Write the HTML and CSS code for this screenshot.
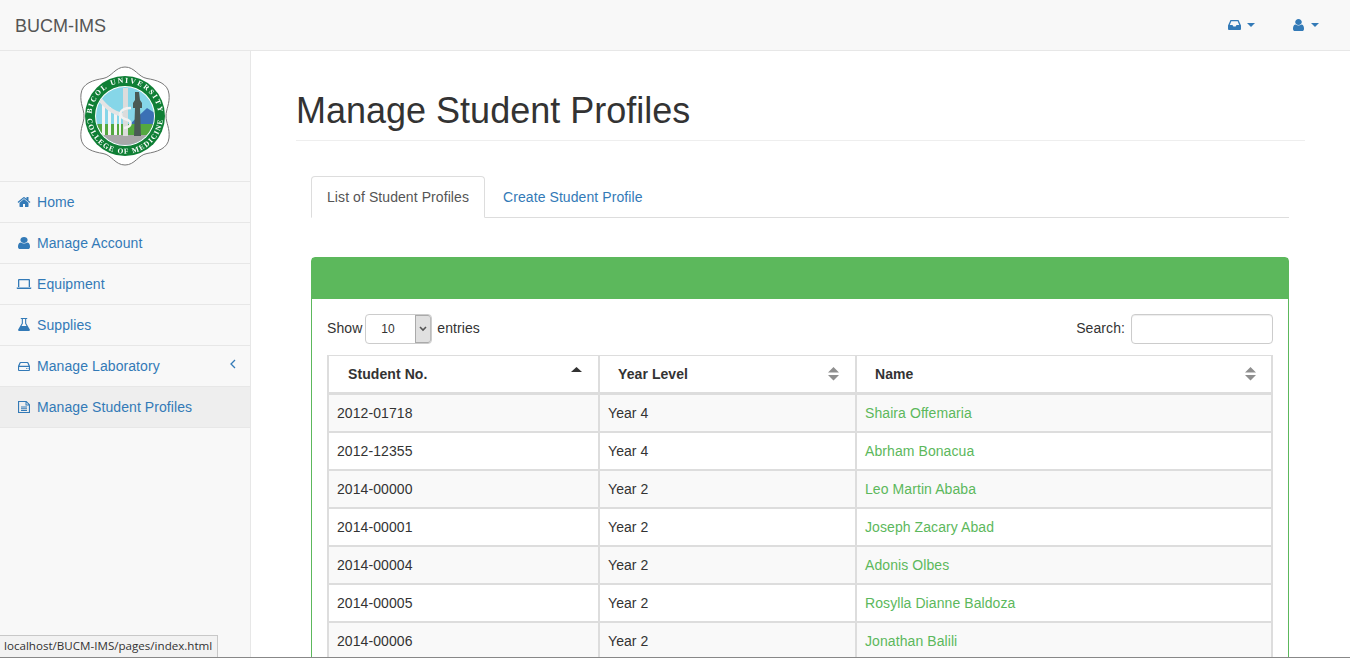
FILE: index.html
```html
<!DOCTYPE html>
<html lang="en">
<head>
    <meta charset="UTF-8">
    <meta name="viewport" content="width=device-width, initial-scale=1.0">
    <title>BUCM-IMS - Manage Student Profiles</title>
    <link rel="stylesheet" href="styles.css">
</head>
<body>
    <div class="navbar">
        <a class="brand" href="#">BUCM-IMS</a>
        <div class="top-links">
            <a href="#">
                <svg class="icon-inbox" viewBox="0 0 13 10"><path d="M2.500 0h8L13 5.500V9a1 1 0 0 1-1 1H1a1 1 0 0 1-1-1V5.500zM3.300 1.300 1.800 5h2.700l.9 1.600h2.200L8.500 5h2.700L9.700 1.300z"/></svg>
                <span class="caret"></span>
            </a>
            <a href="#">
                <svg class="icon-user" viewBox="256 128 1280 1536" preserveAspectRatio="none"><path d="M1536 1399q0 109-62.500 187t-150.500 78h-854q-88 0-150.500-78t-62.500-187q0-85 8.500-160.500t31.500-152 58.500-131 94-89 134.500-34.500q131 128 313 128t313-128q76 0 134.500 34.500t94 89 58.500 131 31.500 152 8.500 160.500zm-256-887q0 159-112.500 271.500t-271.500 112.500-271.500-112.500-112.500-271.500 112.500-271.500 271.500-112.500 271.500 112.500 112.500 271.500z"/></svg>
                <span class="caret"></span>
            </a>
        </div>
    </div>

    <div class="main">
        <div class="sidebar">
            <div class="logo">
                <svg class="seal" width="90" height="100" viewBox="-45 -50 90 100">
                    <defs>
                        <path id="arc-top" d="M-33 6A33.500 33.500 0 1 1 33 6"/>
                        <path id="arc-bottom" d="M-37.700 -5A38 38 0 1 0 37.700 -5"/>
                        <clipPath id="inner"><circle r="29"/></clipPath>
                    </defs>
                    <path class="seal-edge" d="M0-49C10-49 13-39 22-37.500 31-36 43-33 44-22 45-12 41-7 41 0 41 7 45 12 44 22 43 33 31 36 22 37.500 13 39 10 49 0 49-10 49-13 39-22 37.500-31 36-43 33-44 22-45 12-41 7-41 0-41-7-45-12-44-22-43-33-31-36-22-37.500-13-39-10-49 0-49z"/>
                    <circle r="40" fill="#0f7f35"/>
                    <circle r="30" fill="#fff"/>
                    <g clip-path="url(#inner)">
                        <rect x="-30" y="-30" width="60" height="60" fill="#86d6e8"/>
                        <path d="M4 9 22-8 30-3V9z" fill="#3b70b5"/>
                        <rect x="-30" y="8" width="60" height="11" fill="#54a83f"/>
                        <rect x="-30" y="19" width="60" height="11" fill="#a8a8a8"/>
                        <path class="col" d="M-23-14h3V19h-3zM-17-9h3V19h-3zM-11-5h3V19h-3zM-6-3h2V19h-2z"/>
                        <path d="M-25-20C-16-8-8-3 2-3V1C-9 1-19-5-27-16z" fill="#e4e4e4"/>
                        <rect x="-2" y="-28" width="5" height="48" fill="#dcdcdc"/>
                        <path d="M6-8C-7-8-7 1 0 3 8 5 7 11-1 12" fill="none" stroke="#f2f2f2" stroke-width="2.500"/>
                        <path d="M10-24h4l1 8 2 3v5h-2l1 28h-7l1-28h-2v-5l2-3z" fill="#4a5a55"/>
                    </g>
                    <text class="seal-text seal-top"><textPath href="#arc-top" startOffset="50%">BICOL UNIVERSITY</textPath></text>
                    <text class="seal-text"><textPath href="#arc-bottom" startOffset="50%">COLLEGE OF MEDICINE</textPath></text>
                </svg>
            </div>
            <ul class="side-menu">
                <li><a href="#">
                    <svg class="fw" viewBox="-128 -128 2048 2048"><path d="M1472 992v480q0 26-19 45t-45 19h-384v-384h-256v384h-384q-26 0-45-19t-19-45v-480q0-1 .5-3t.5-3l575-474 575 474q1 2 1 6zm223-69l-62 74q-8 9-21 11h-3q-13 0-21-7l-692-577-692 577q-12 8-24 7-13-2-21-11l-62-74q-8-10-7-23.500t11-21.500l719-599q32-26 76-26t76 26l244 204v-195q0-14 9-23t23-9h192q14 0 23 9t9 23v408l219 182q10 8 11 21.500t-7 23.500z"/></svg>Home</a></li>
                <li><a href="#">
                    <svg class="fw" viewBox="42 -127 1707 2048" preserveAspectRatio="none"><path d="M1536 1399q0 109-62.500 187t-150.500 78h-854q-88 0-150.500-78t-62.500-187q0-85 8.500-160.500t31.500-152 58.500-131 94-89 134.500-34.500q131 128 313 128t313-128q76 0 134.500 34.500t94 89 58.500 131 31.500 152 8.500 160.500zm-256-887q0 159-112.500 271.500t-271.500 112.500-271.500-112.500-112.500-271.500 112.500-271.500 271.500-112.500 271.500 112.500 112.500 271.500z"/></svg>Manage Account</a></li>
                <li><a href="#">
                    <svg class="fw" viewBox="0 0 16 16"><path d="M3 3h10a1 1 0 0 1 1 1v7h-1.300V4.300H3.300V11H2V4a1 1 0 0 1 1-1zM.7 11.500h14.600v.7a.8.8 0 0 1-.8.8h-13a.8.8 0 0 1-.8-.8z"/></svg>Equipment</a></li>
                <li><a href="#">
                    <svg class="fw" viewBox="0 0 16 16"><path d="M4.800 1h6.400v1h-1v4.200l3.600 6.300a1 1 0 0 1-.9 1.500H3.100a1 1 0 0 1-.9-1.500l3.600-6.300V2h-1zM6.900 2v4.500L5.500 9h5L9.100 6.500V2z"/></svg>Supplies</a></li>
                <li><a href="#">
                    <svg class="fw" viewBox="0 0 16 16"><path d="M4.500 4h7a1 1 0 0 1 .9.600L14 8v4a1 1 0 0 1-1 1H3a1 1 0 0 1-1-1V8l1.600-3.400A1 1 0 0 1 4.500 4zM4.700 5.100 3.500 7.800h9l-1.200-2.700zM3.100 8.900v3h9.800v-3zM10 10.200h1v.8h-1zM11.500 10.200h1v.8h-1z"/></svg>Manage Laboratory
                    <svg class="angle" viewBox="0 0 6 10"><path d="M5 1 1 5l4 4" fill="none" stroke="#337ab7" stroke-width="1.300"/></svg></a></li>
                <li class="active"><a href="#">
                    <svg class="fw" viewBox="0 0 16 16"><path d="M2 2h8.500L14 5.500V14H2zM3.100 3.100v9.800h9.800V6.500H9.500V3.100zM10.500 3.500v2h2zM5 7.500h6v1H5zM5 9.300h6v1H5zM5 11.100h6v1H5z"/></svg>Manage Student Profiles</a></li>
            </ul>
        </div>

        <div class="page-wrapper">
            <h1 class="page-header">Manage Student Profiles</h1>
            <div class="content">
                <ul class="tabs">
                    <li class="active"><a href="#">List of Student Profiles</a></li>
                    <li><a href="#">Create Student Profile</a></li>
                </ul>
                <div class="panel">
                    <div class="panel-heading"></div>
                    <div class="panel-body">
                        <div class="table-tools">
                            <div class="tool">
                                Show
                                <div class="select-box"><span class="select-value">10</span><span class="select-arrow"><svg width="8" height="6" viewBox="0 0 8 6"><path d="M1 1l3 3 3-3" fill="none" stroke="#555" stroke-width="1.600"/></svg></span></div>
                                entries
                            </div>
                            <div class="tool">Search: <input class="search" type="text"></div>
                        </div>
                        <table class="students">
                            <colgroup><col class="col-no"><col class="col-year"><col class="col-name"></colgroup>
                            <thead>
                                <tr>
                                    <th class="th-no"><div class="th-in">Student No.<svg class="sort" viewBox="0 0 11 14"><path d="M5.500 0 11 5H0z" fill="#333"/></svg></div></th>
                                    <th class="th-year"><div class="th-in">Year Level<svg class="sort" viewBox="0 0 11 14"><path d="M5.500 0 11 5.500H0zM0 8h11l-5.500 5.500z" fill="#8f8f8f"/></svg></div></th>
                                    <th class="th-name"><div class="th-in">Name<svg class="sort" viewBox="0 0 11 14"><path d="M5.500 0 11 5.500H0zM0 8h11l-5.500 5.500z" fill="#8f8f8f"/></svg></div></th>
                                </tr>
                            </thead>
                            <tbody>
                                <tr><td>2012-01718</td><td>Year 4</td><td><a href="#">Shaira Offemaria</a></td></tr>
                                <tr><td>2012-12355</td><td>Year 4</td><td><a href="#">Abrham Bonacua</a></td></tr>
                                <tr><td>2014-00000</td><td>Year 2</td><td><a href="#">Leo Martin Ababa</a></td></tr>
                                <tr><td>2014-00001</td><td>Year 2</td><td><a href="#">Joseph Zacary Abad</a></td></tr>
                                <tr><td>2014-00004</td><td>Year 2</td><td><a href="#">Adonis Olbes</a></td></tr>
                                <tr><td>2014-00005</td><td>Year 2</td><td><a href="#">Rosylla Dianne Baldoza</a></td></tr>
                                <tr><td>2014-00006</td><td>Year 2</td><td><a href="#">Jonathan Balili</a></td></tr>
                            </tbody>
                        </table>
                    </div>
                </div>
            </div>
        </div>
    </div>

    <!-- link preview at the bottom of the window -->
    <div class="status-tip">localhost/BUCM-IMS/pages/index.html</div>
    <div class="window-edge"></div>
</body>
</html>
```

FILE: styles.css
```css
*{
    margin: 0;
    padding: 0;
    list-style: none;
    box-sizing: border-box;
}
html, body{
    height: 100%;
    overflow: hidden;
}
body{
    font-family: "Liberation Sans", Arial, sans-serif;
    font-size: 14px;
    line-height: 20px;
    letter-spacing: .08px;
    color: #333;
    background-color: #fff;
    position: relative;
}
a{
    color: #337ab7;
    text-decoration: none;
}

/* top bar */
.navbar{
    height: 51px;
    display: flex;
    justify-content: space-between;
    align-items: center;
    background-color: #f8f8f8;
    border-bottom: 1px solid #e7e7e7;
}
.brand{
    margin-left: 15px;
    padding-top: 2px;
    font-size: 18px;
    letter-spacing: 0;
    color: #555;
}
.top-links{
    display: flex;
    margin-right: 31px;
}
.top-links a{
    display: flex;
    align-items: center;
}
.top-links a + a{
    margin-left: 38px;
}
.icon-inbox{
    width: 13px;
    height: 10px;
    fill: #337ab7;
}
.icon-user{
    width: 11px;
    height: 12px;
    fill: #337ab7;
    margin-right: 1px;
}
.caret{
    width: 0;
    height: 0;
    margin-left: 6px;
    border-top: 4px solid #337ab7;
    border-left: 4px solid transparent;
    border-right: 4px solid transparent;
}

.main{
    display: flex;
    height: calc(100vh - 51px);
}

/* sidebar */
.sidebar{
    width: 251px;
    flex-shrink: 0;
    background-color: #f8f8f8;
    border-right: 1px solid #e7e7e7;
}
.logo{
    height: 130px;
    display: flex;
    justify-content: center;
    align-items: center;
}
.seal{
    filter: blur(.25px);
}
.seal-edge{
    fill: #fff;
    stroke: #777;
    stroke-width: 1;
}
.col{
    fill: #f4f4f4;
}
.seal-text{
    fill: #fff;
    font-family: "Liberation Serif", serif;
    font-weight: bold;
    font-size: 7.500px;
    letter-spacing: 1.200px;
    text-anchor: middle;
}
.seal-top{
    letter-spacing: 1.700px;
}
.side-menu li{
    border-top: 1px solid #e7e7e7;
}
.side-menu li:last-child{
    border-bottom: 1px solid #e7e7e7;
}
.side-menu a{
    display: flex;
    align-items: center;
    height: 40px;
    padding: 0 15px;
}
.side-menu .active a{
    background-color: #eee;
}
.fw{
    width: 16px;
    height: 16px;
    margin: 0 5px 0 1px;
    fill: #337ab7;
    flex-shrink: 0;
}
.angle{
    width: 6px;
    height: 10px;
    margin-left: auto;
    margin-right: -1px;
    position: relative;
    top: -2px;
}

/* content */
.page-wrapper{
    flex: 1;
    padding: 0 45px;
}
.page-header{
    margin: 40px 0 20px;
    padding-bottom: 9px;
    font-size: 36px;
    font-weight: 500;
    line-height: 40px;
    letter-spacing: 0;
    border-bottom: 1px solid #eee;
}
.content{
    padding: 15px 15px 0;
    margin-right: 1px;
}
.tabs{
    display: flex;
    border-bottom: 1px solid #ddd;
    margin-bottom: 39px;
}
.tabs a{
    display: block;
    height: 42px;
    padding: 10px 15px;
    margin-right: 2px;
    margin-bottom: -1px;
    border: 1px solid transparent;
    border-radius: 4px 4px 0 0;
}
.tabs .active a{
    color: #555;
    background-color: #fff;
    border-color: #ddd #ddd #fff;
}
.panel{
    border: 1px solid #5cb85c;
    border-radius: 4px 4px 0 0;
}
.panel-heading{
    height: 41px;
    background-color: #5cb85c;
}
.panel-body{
    padding: 15px;
}
.table-tools{
    display: flex;
    justify-content: space-between;
    margin-bottom: 11px;
}
.tool{
    display: flex;
    line-height: 28px;
}
.select-box{
    display: flex;
    width: 67px;
    height: 30px;
    margin: 0 5px 0 3px;
    border: 1px solid #ccc;
    border-radius: 4px;
    font-size: 12px;
    overflow: hidden;
}
.select-value{
    flex: 1;
    padding-left: 15px;
    line-height: 28px;
}
.select-arrow{
    width: 16px;
    display: flex;
    align-items: center;
    justify-content: center;
    background-color: #e0e0e0;
    border: 1px solid #aaa;
    border-right-color: #bbb;
    border-radius: 0 3px 3px 0;
}
.search{
    width: 142px;
    height: 30px;
    margin-left: 6px;
    border: 1px solid #ccc;
    border-radius: 4px;
    box-shadow: inset 0 1px 1px rgba(0,0,0,.075);
}

/* table keeps each cell's own border, so the lines between cells are doubled */
.students{
    width: 946px;
    table-layout: fixed;
    border-collapse: separate;
    border-spacing: 0;
    border: 1px solid #ddd;
}
.col-no{
    width: 271px;
}
.col-year{
    width: 257px;
}
.students th, .students td{
    border: 1px solid #ddd;
    padding: 8px;
    text-align: left;
}
.students th{
    border-top: 0;
    border-bottom-width: 2px;
}
.th-in{
    display: flex;
    justify-content: space-between;
    align-items: center;
}
.students .th-no{
    padding-left: 19px;
}
.students .th-year{
    padding-left: 18px;
}
.students .th-name{
    padding-left: 18px;
}
.sort{
    width: 11px;
    height: 14px;
    margin-right: 8px;
}
.th-name .sort{
    margin-right: 7px;
}
.students tbody tr:nth-child(odd){
    background-color: #f9f9f9;
}
.students td a{
    color: #5cb85c;
}

.status-tip{
    position: absolute;
    left: 0;
    bottom: 1px;
    width: 218px;
    height: 22px;
    padding-left: 4px;
    font-family: "Open Sans", "Noto Sans", sans-serif;
    font-size: 11.600px;
    letter-spacing: 0;
    line-height: 20px;
    color: #333;
    background-color: #f2f2f2;
    border: 1px solid #c8c8c8;
    border-left: 0;
    border-bottom: 0;
}
.window-edge{
    position: absolute;
    left: 0;
    right: 0;
    bottom: 0;
    height: 1px;
    background-color: #888;
}
```
